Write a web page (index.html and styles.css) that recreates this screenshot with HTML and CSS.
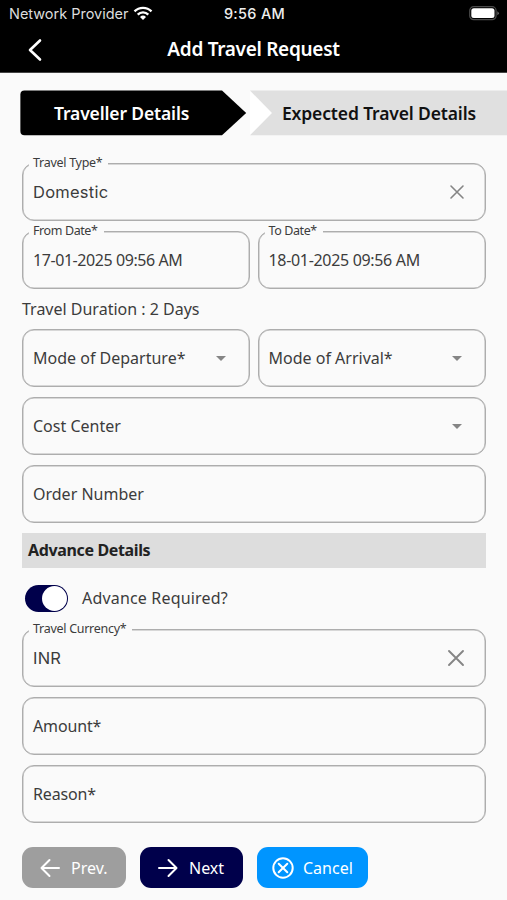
FILE: index.html
```html
<!DOCTYPE html>
<html lang="en">
<head>
<meta charset="utf-8">
<title>Add Travel Request</title>
<link rel="stylesheet" href="styles.css">
</head>
<body>
<header class="top">
  <div class="status">
    <div class="carrier"><span>Network Provider</span>
      <svg width="20" height="15" viewBox="0 0 20 15" fill="none" stroke="#fff" stroke-width="2.3"><path d="M1.5 5.4a12 12 0 0 1 17 0M4.7 8.6a7.5 7.5 0 0 1 10.6 0"/><path d="M10 14l-3-3.1a4.3 4.3 0 0 1 6 0z" fill="#fff" stroke="none"/></svg>
    </div>
    <div class="clock">9:56 AM</div>
    <svg class="battery" width="31" height="15" viewBox="0 0 31 15"><rect x=".7" y=".7" width="26.4" height="13" rx="4" fill="none" stroke="#4b4b4b" stroke-width="1.2"/><rect x="2.3" y="2.3" width="23.2" height="9.8" rx="2.5" fill="#fff"/><path d="M28.3 5.2q3.2 2 0 4z" fill="#666"/></svg>
  </div>
  <div class="navbar">
    <svg class="back" width="16" height="24" viewBox="0 0 16 24" fill="none" stroke="#fff" stroke-width="2.6" stroke-linecap="round" stroke-linejoin="round"><path d="M13 2.500L3 12l10 9.500"/></svg>
    <h1>Add Travel Request</h1>
  </div>
</header>
<nav class="steps">
  <div class="step current"><svg class="shape" width="227" height="46" viewBox="0 0 227 46"><path d="M4.500.5H202L226.200 23 202 45.300H4.500Q.4 45.300.4 41V4.500Q.4.5 4.500.5z"/></svg><span>Traveller Details</span></div>
  <div class="step next"><svg class="shape" width="257" height="46" viewBox="0 0 257 46"><path d="M0 1v44L22 23z" fill="#fff"/><path d="M0 .5H257V45.300H0L22 23z" fill="#e0e0e0"/></svg><span>Expected Travel Details</span></div>
</nav>
<main class="form">
  <div class="field"><label>Travel Type*</label><span class="sys">Domestic</span><svg class="x" width="16" height="16" viewBox="0 0 16 16"><path d="M2 2l12 12M14 2L2 14"/></svg></div>
  <div class="row">
    <div class="field"><label class="tight">From Date*</label><span class="date">17-01-2025 09:56 AM</span></div>
    <div class="field"><label class="tight">To Date*</label><span class="date end">18-01-2025 09:56 AM</span></div>
  </div>
  <p class="duration">Travel Duration : 2 Days</p>
  <div class="row">
    <div class="field"><span>Mode of Departure*</span><i class="caret"></i></div>
    <div class="field"><span>Mode of Arrival*</span><i class="caret"></i></div>
  </div>
  <div class="field"><span>Cost Center</span><i class="caret"></i></div>
  <div class="field"><span>Order Number</span></div>
  <h2>Advance Details</h2>
  <div class="toggle-row"><span class="toggle"><i></i></span><span class="question">Advance Required?</span></div>
  <div class="field"><label>Travel Currency*</label><span class="sys">INR</span><svg class="x" width="18" height="18" viewBox="0 0 18 18"><path d="M2 2l14 14M16 2L2 16" stroke-width="1.9"/></svg></div>
  <div class="field"><span class="short">Amount*</span></div>
  <div class="field"><span class="short">Reason*</span></div>
  <div class="actions">
    <button class="prev"><svg width="22" height="22" viewBox="0 0 22 22"><path d="M20 11H3M10.500 3L2.500 11l8 8"/></svg><span>Prev.</span></button>
    <button class="go"><svg width="22" height="22" viewBox="0 0 22 22"><path d="M2 11h17M11.500 3l8 8-8 8"/></svg><span>Next</span></button>
    <button class="cancel"><svg width="22" height="22" viewBox="0 0 22 22"><circle cx="11" cy="11" r="9.700"/><path d="M6.700 6.700l8.600 8.600M15.300 6.700l-8.600 8.600"/></svg><span>Cancel</span></button>
  </div>
</main>
</body>
</html>
```

FILE: styles.css
```css
* { box-sizing: border-box; }
body { margin: 0; background: #fafafa; color: #3c3c3c; font-family: "Noto Sans", "Open Sans", sans-serif; font-size: 16px; width: 507px; height: 900px; overflow: hidden; }
span, label, h1 { white-space: nowrap; }
.top { height: 73px; background: #000; color: #fff; border-bottom: 1px solid #444; }
.status { height: 27px; display: grid; grid-template-columns: 1fr auto 1fr; align-items: center; padding: 0 7px 0 9px; font-family: Inter, sans-serif; font-size: 14.5px; }
.carrier { display: flex; align-items: center; gap: 5px; color: #ddd; }
.carrier span { letter-spacing: -.02px; }
.clock { font-weight: 500; letter-spacing: .3px; color: #eee; }
.battery { justify-self: end; }
.navbar { height: 45px; display: grid; grid-template-columns: 80px 1fr 80px; align-items: center; }
.back { margin-left: 27px; }
h1 { margin: 0; padding-bottom: 2px; text-align: center; font-size: 19px; font-weight: 600; letter-spacing: -.3px; }
.steps { display: flex; gap: 3px; margin: 17px 0 0 20px; height: 46px; overflow: hidden; }
.step { display: grid; flex: none; align-items: center; font-size: 17.5px; font-weight: 600; letter-spacing: -.14px; }
.step > * { grid-area: 1 / 1; }
.step span { z-index: 1; padding-bottom: 1px; }
.current { width: 227px; color: #fff; }
.current span { padding-left: 34px; }
.next { width: 257px; color: #111; }
.next span { padding-left: 32px; }
.form { padding: 27px 21.5px 0 22px; display: flex; flex-direction: column; gap: 10px; }
.row { display: grid; grid-template-columns: 228px 228px; justify-content: space-between; }
.field { position: relative; height: 58px; border: 1px solid #adadad; box-shadow: inset 0 0 0 .5px #b4b4b4; border-radius: 12px; display: flex; align-items: center; justify-content: space-between; padding: 0 21px 0 10px; }
.field label { position: absolute; left: 6px; top: -10px; padding: 0 6px 0 4px; background: #fafafa; font-size: 12.5px; line-height: 18px; letter-spacing: -.28px; }
.field .tight { letter-spacing: -.4px; }
.sys { font-family: Inter, sans-serif; font-size: 16.5px; letter-spacing: .25px; }
.date { letter-spacing: -.43px; }
.date.end { letter-spacing: -.32px; }
.short { letter-spacing: -.15px; }
.x { fill: none; stroke: #858585; stroke-width: 1.6; stroke-linecap: round; flex: none; }
.field .x { margin-right: -1px; }
.caret { border: 5px solid transparent; border-top-color: #858585; border-bottom: 0; margin-right: 2px; }
.duration { margin: 0; height: 20px; line-height: 20px; }
h2 { margin: 0; height: 35px; line-height: 35px; padding-left: 6px; background: #ddd; color: #222; font-size: 16px; font-weight: 700; letter-spacing: -.36px; }
.toggle-row { height: 41px; display: flex; align-items: center; gap: 14px; padding: 0 0 0 3px; }
.toggle { width: 43px; height: 27px; border-radius: 14px; background: #00004b; padding: 1px; display: flex; justify-content: flex-end; }
.toggle i { width: 25px; height: 25px; border-radius: 50%; background: #fff; }
.question { letter-spacing: .18px; padding-bottom: 1px; }
.actions { display: flex; gap: 14px; padding-top: 14px; }
button { border: 0; margin: 0; height: 41px; border-radius: 11px; color: #fff; font: 16px "Noto Sans", sans-serif; display: flex; align-items: center; gap: 10px; padding: 0 0 0 17px; }
button svg { fill: none; stroke: #fff; stroke-width: 2; stroke-linecap: round; stroke-linejoin: round; }
.prev { width: 104px; background: #9e9e9e; }
.go { width: 103px; background: #00004b; }
.cancel { width: 111px; background: #0095ff; padding-left: 15px; gap: 9px; }
```
